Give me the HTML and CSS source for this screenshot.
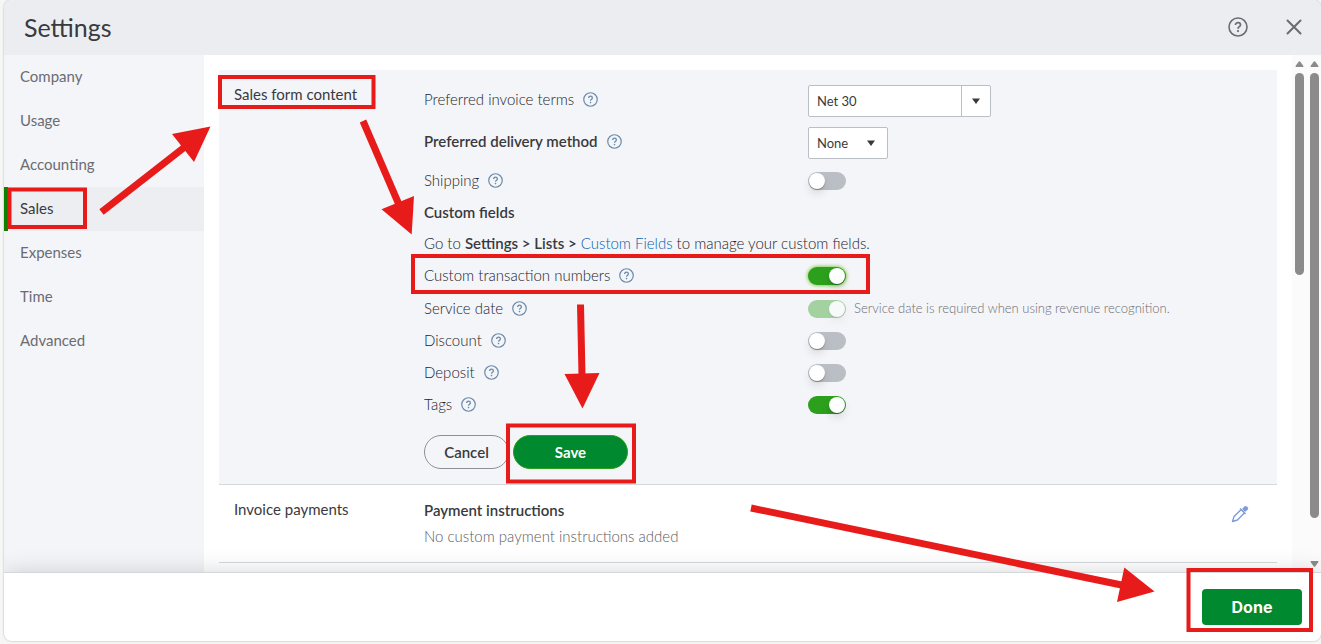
FILE: index.html
```html
<!DOCTYPE html>
<html lang="en">
<head>
<meta charset="utf-8">
<title>Settings</title>
<link rel="stylesheet" href="styles.css">
</head>
<body>
<svg class="symbols" aria-hidden="true">
  <symbol id="help" viewBox="0 0 20 20">
    <circle cx="10" cy="10" r="9" fill="none" stroke="currentColor" stroke-width="1.6"/>
    <path d="M7.500 8.100c0-1.600 1-2.500 2.500-2.500s2.500.9 2.500 2.300c0 1.700-2.500 1.800-2.500 3.800" fill="none" stroke="currentColor" stroke-width="1.7"/>
    <circle cx="10" cy="14.1" r="1.1" fill="currentColor"/>
  </symbol>
  <symbol id="caret" viewBox="0 0 8 6"><path d="M0 0.500h8L4 6z" fill="currentColor"/></symbol>
  <symbol id="scroll-up" viewBox="0 0 10 7"><path d="M4 .8Q5-.4 6 .8L9.600 5.700Q10 7 8.800 7H1.200Q0 7 .4 5.700z" fill="currentColor"/></symbol>
</svg>
<div class="dialog">
  <header class="header">
    <h1 class="title">Settings</h1>
    <button class="icon-button" type="button" aria-label="Help"><svg width="20" height="20"><use href="#help"/></svg></button>
    <button class="icon-button" type="button" aria-label="Close"><svg width="16" height="16" viewBox="0 0 16 16"><path d="M1.500 1.500l13 13M14.500 1.500l-13 13" stroke="currentColor" stroke-width="2" stroke-linecap="round"/></svg></button>
  </header>
  <div class="body">
    <nav class="sidebar">
      <a class="nav-item" href="#company">Company</a>
      <a class="nav-item" href="#usage">Usage</a>
      <a class="nav-item" href="#accounting">Accounting</a>
      <a class="nav-item nav-item-active" href="#sales" aria-current="page">Sales</a>
      <a class="nav-item" href="#expenses">Expenses</a>
      <a class="nav-item" href="#time">Time</a>
      <a class="nav-item" href="#advanced">Advanced</a>
    </nav>
    <main class="content">
      <section class="section section-open">
        <h2 class="section-name">Sales form content</h2>
        <form class="fields">
          <div class="row row-select">
            <div class="label"><label for="terms">Preferred invoice terms</label><svg class="help" role="img" aria-label="Help"><use href="#help"/></svg></div>
            <div class="combo">
              <input class="combo-input" id="terms" type="text" value="Net 30">
              <button class="combo-button" type="button" aria-label="Show terms"><svg class="caret"><use href="#caret"/></svg></button>
            </div>
          </div>
          <div class="row row-select">
            <div class="label strong"><label for="delivery">Preferred delivery method</label><svg class="help" role="img" aria-label="Help"><use href="#help"/></svg></div>
            <div class="picker">
              <select class="picker-select" id="delivery"><option>None</option></select>
              <svg class="caret picker-caret"><use href="#caret"/></svg>
            </div>
          </div>
          <div class="row">
            <div class="label"><label for="shipping">Shipping</label><svg class="help" role="img" aria-label="Help"><use href="#help"/></svg></div>
            <input class="toggle" id="shipping" type="checkbox">
          </div>
          <h3 class="subhead">Custom fields</h3>
          <p class="note">Go to <b>Settings &gt; Lists &gt;</b> <a class="link" href="#custom-fields">Custom Fields</a> to manage your custom fields.</p>
          <div class="row row-tall">
            <div class="label"><label for="numbers">Custom transaction numbers</label><svg class="help" role="img" aria-label="Help"><use href="#help"/></svg></div>
            <input class="toggle toggle-focus" id="numbers" type="checkbox" checked>
          </div>
          <div class="row">
            <div class="label"><label for="service">Service date</label><svg class="help" role="img" aria-label="Help"><use href="#help"/></svg></div>
            <input class="toggle" id="service" type="checkbox" checked disabled>
            <span class="hint">Service date is required when using revenue recognition.</span>
          </div>
          <div class="row">
            <div class="label"><label for="discount">Discount</label><svg class="help" role="img" aria-label="Help"><use href="#help"/></svg></div>
            <input class="toggle" id="discount" type="checkbox">
          </div>
          <div class="row">
            <div class="label"><label for="deposit">Deposit</label><svg class="help" role="img" aria-label="Help"><use href="#help"/></svg></div>
            <input class="toggle" id="deposit" type="checkbox">
          </div>
          <div class="row">
            <div class="label"><label for="tags">Tags</label><svg class="help" role="img" aria-label="Help"><use href="#help"/></svg></div>
            <input class="toggle" id="tags" type="checkbox" checked>
          </div>
          <div class="actions">
            <button class="pill" type="button">Cancel</button>
            <button class="pill pill-primary" type="button">Save</button>
          </div>
        </form>
      </section>
      <section class="section">
        <h2 class="section-name">Invoice payments</h2>
        <div class="summary">
          <h3 class="summary-title">Payment instructions</h3>
          <p class="summary-text">No custom payment instructions added</p>
        </div>
        <button class="edit" type="button" aria-label="Edit invoice payments">
          <svg width="18" height="18" viewBox="0 0 18 18"><path d="M1.500 16.500L3 11.600 10.200 4.400 13.600 7.800 6.400 15z M9 3.400l5.600 5.600" fill="none" stroke="currentColor" stroke-width="1.400" stroke-linejoin="round"/><path d="M11.300 3.800l2-2.300q1.300-1.200 2.600 0l.7.700q1.200 1.300 0 2.600l-2.300 2q-2-.8-3-3z" fill="currentColor"/></svg>
        </button>
      </section>
    </main>
    <div class="scrollbar scrollbar-inner" aria-hidden="true"><svg class="scroll-arrow"><use href="#scroll-up"/></svg><div class="thumb thumb-inner"></div></div>
    <div class="scrollbar" aria-hidden="true"><svg class="scroll-arrow"><use href="#scroll-up"/></svg><div class="thumb thumb-outer"></div><svg class="scroll-arrow scroll-arrow-down"><use href="#scroll-up"/></svg></div>
  </div>
  <footer class="footer"><button class="done" type="button">Done</button></footer>
</div>
<svg class="annotations" width="1321" height="644" viewBox="0 0 1321 644" aria-hidden="true">
  <g fill="none" stroke="#e81b1b" stroke-width="4">
    <rect x="9.500" y="189.500" width="75.500" height="37.500"/>
    <rect x="220" y="77" width="153.500" height="30"/>
    <rect x="413" y="256" width="455" height="36"/>
    <rect x="508" y="425.500" width="126" height="56"/>
    <rect x="1188.500" y="570" width="122.500" height="60"/>
  </g>
  <g fill="none" stroke="#e81b1b" stroke-width="7">
    <path d="M101.500 212L186 146"/>
    <path d="M363 121L400 207"/>
    <path d="M580.500 304.500L582 376"/>
    <path d="M751 508L1124 585.500"/>
  </g>
  <g fill="#e81b1b">
    <path d="M210.500 126.500L172 134 194 162z"/>
    <path d="M411.700 234.500L381.500 209.300 414 196z"/>
    <path d="M582.500 408.500L564.500 374 599.500 373z"/>
    <path d="M1154.500 591.500L1124.300 567.500 1117 602z"/>
  </g>
</svg>
</body>
</html>
```
FILE: styles.css
```css
* {
  box-sizing: border-box;
}

body {
  margin: 0;
  height: 100vh;
  padding: 0 0 3px 4px;
  background: #f6f6f5;
  color: #393a3d;
  font: 15px/20px Lato, "Noto Sans", sans-serif;
  position: relative;
  overflow: hidden;
}

h1, h2, h3, p {
  margin: 0;
  font-size: inherit;
  font-weight: 400;
}

button, input, select {
  font: inherit;
  color: inherit;
}

button {
  padding: 0;
  border: 0;
  background: none;
}

svg {
  display: block;
}

.symbols {
  display: none;
}

.dialog {
  height: 100%;
  display: flex;
  flex-direction: column;
  overflow: hidden;
  border-radius: 8px;
  background: #fff;
  box-shadow: 0 0 2px rgba(0, 0, 0, 0.35);
}

.header {
  flex: none;
  height: 55px;
  padding: 0 19px 2px 20px;
  display: flex;
  align-items: center;
  gap: 38px;
  background: #ecedf1;
}

.title {
  flex: 1;
  font-size: 25px;
  line-height: 32px;
}

.icon-button {
  color: #6b6c72;
}

.body {
  flex: 1;
  min-height: 0;
  display: flex;
  overflow: hidden;
}

.sidebar {
  flex: none;
  width: 200px;
  background: #f4f5f9;
}

.nav-item {
  display: block;
  padding: 10px 16px 12px;
  line-height: 22px;
  color: #6b6c72;
  text-decoration: none;
}

.nav-item-active {
  padding-left: 12px;
  border-left: 4px solid #108000;
  background: #edeef2;
  color: #393a3d;
}

.content {
  flex: 1;
  min-width: 0;
  padding: 15px 15px 0;
}

.section {
  display: flex;
  padding: 15px 15px 16px;
  border-bottom: 1px solid #d4d7dc;
}

.section-open {
  padding-bottom: 15px;
  background: #f4f5f9;
}

.section-name {
  flex: none;
  width: 190px;
  line-height: 18px;
}

.fields {
  flex: 1;
  min-width: 0;
}

.row {
  height: 32px;
  display: flex;
  align-items: center;
}

.row-tall {
  height: 34px;
}

.row-select {
  align-items: stretch;
  margin-bottom: 10px;
}

.row-select + .row-select {
  margin-bottom: 6px;
}

.row-select .label {
  padding-bottom: 4px;
}

.label {
  flex: none;
  width: 384px;
  padding-bottom: 2px;
  display: flex;
  align-items: center;
  gap: 9px;
}

.label, .note {
  color: #232427;
}

.label, .note, .hint, .summary-text {
  font-weight: 300;
}

.strong, .subhead, .summary-title, b {
  color: #393a3d;
  font-weight: 600;
}

.help {
  width: 15px;
  height: 15px;
  color: #6b8aa8;
}

.combo {
  width: 183px;
  display: flex;
  border: 1px solid #babec5;
  border-radius: 2px;
  background: #fff;
  font-size: 13px;
}

.combo-input {
  flex: 1;
  min-width: 0;
  padding: 0 8px;
  border: 0;
  background: none;
}

.combo-button {
  width: 29px;
  display: flex;
  align-items: center;
  justify-content: center;
  border-left: 1px solid #babec5;
}

.caret {
  width: 8px;
  height: 6px;
}

.picker {
  width: 80px;
  display: grid;
  align-items: center;
  font-size: 13px;
}

.picker-select, .picker-caret {
  grid-area: 1 / 1;
}

.picker-select {
  width: 100%;
  height: 32px;
  padding: 0 8px;
  border: 1px solid #babec5;
  border-radius: 2px;
  appearance: none;
  background: #fff;
}

.picker-caret {
  justify-self: end;
  margin-right: 13px;
  pointer-events: none;
}

.toggle {
  flex: none;
  appearance: none;
  width: 38px;
  height: 18px;
  margin: 0;
  padding: 1px;
  display: flex;
  border-radius: 9px;
  background: #babec5;
}

.toggle::before {
  content: "";
  width: 16px;
  height: 16px;
  border-radius: 50%;
  background: #fff;
  box-shadow: 0 1px 1px rgba(0, 0, 0, 0.3), 0 5px 9px rgba(0, 0, 0, 0.1);
}

.toggle:checked {
  justify-content: flex-end;
  background: #2ca01c;
}

.toggle:disabled {
  opacity: 0.4;
}

.toggle-focus {
  box-shadow: 0 0 4px #53b700;
}

.subhead {
  line-height: 30px;
}

.note {
  line-height: 32px;
}

.link {
  color: #0063b0;
  text-decoration: none;
}

.hint {
  margin-left: 8px;
  padding-bottom: 2px;
  font-size: 13px;
  color: #6b6c72;
}

.actions {
  margin-top: 14px;
  display: flex;
  gap: 4px;
}

.pill {
  height: 34px;
  width: 85px;
  border: 1px solid #8d9096;
  border-radius: 17px;
  font-weight: 600;
}

.pill-primary {
  width: 115px;
  border-color: #2ca01c;
  background: #00892e;
  color: #fff;
  font-weight: 700;
}

.summary {
  flex: 1;
  display: grid;
  gap: 6px;
}

.summary-text {
  color: #5c5d63;
}

.edit {
  align-self: flex-start;
  margin: 5px 13px 0 0;
  color: #7f9bdb;
}

.scrollbar {
  flex: none;
  width: 15px;
  padding: 6px 2px 5px 0;
  display: flex;
  flex-direction: column;
  align-items: flex-end;
  background: #fbfbfb;
  color: #8b8b8b;
}

.scrollbar-inner {
  width: 14px;
}

.scroll-arrow {
  flex: none;
  width: 9px;
  height: 6px;
}

.scroll-arrow-down {
  margin-top: auto;
  transform: rotate(180deg);
}

.thumb {
  width: 9px;
  margin-top: 6px;
  border-radius: 5px;
  background: currentColor;
}

.thumb-inner {
  height: 40%;
}

.thumb-outer {
  height: 88%;
}

.footer {
  flex: none;
  height: 69px;
  padding: 0 19px;
  display: flex;
  align-items: center;
  justify-content: flex-end;
  position: relative;
  border-top: 1px solid #d4d7dc;
  background: #fff;
  box-shadow: 0 0 22px rgba(0, 0, 0, 0.16);
}

.done {
  width: 100px;
  height: 36px;
  border-radius: 4px;
  background: #00892e;
  color: #fff;
  font: 700 16px/20px Inter, "Open Sans", sans-serif;
}

.annotations {
  position: absolute;
  top: 0;
  left: 0;
  pointer-events: none;
}
```
